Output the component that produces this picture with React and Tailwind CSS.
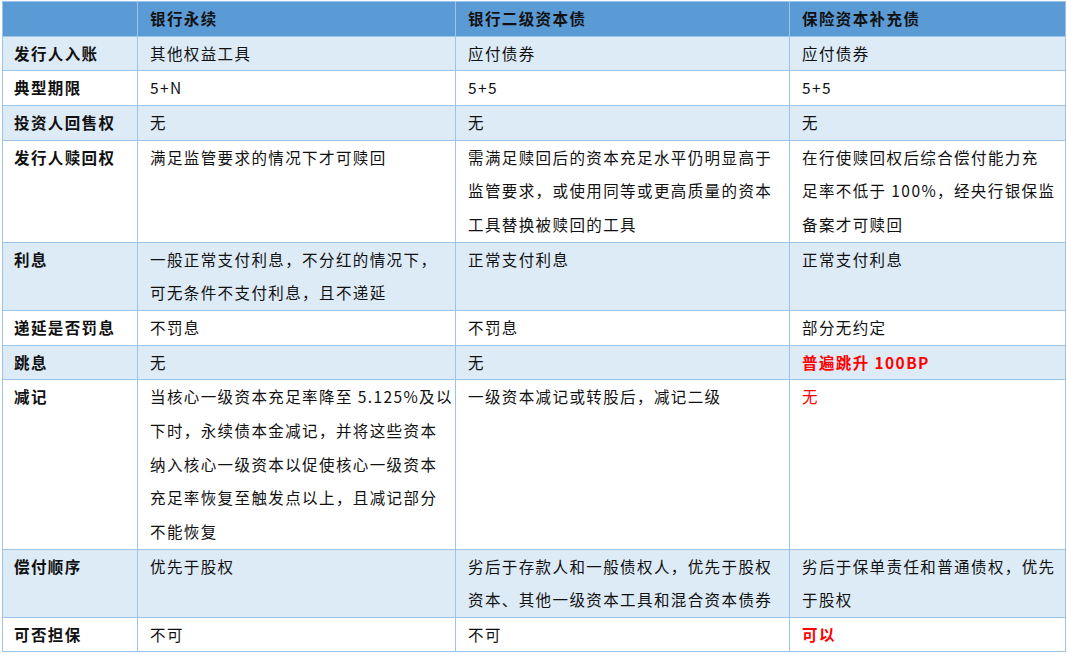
import React from "react";

const rows = [
  { h: "发行人入账", c: [["其他权益工具"], ["应付债券"], ["应付债券"]] },
  { h: "典型期限", c: [["5+N"], ["5+5"], ["5+5"]] },
  { h: "投资人回售权", c: [["无"], ["无"], ["无"]] },
  {
    h: "发行人赎回权",
    c: [
      ["满足监管要求的情况下才可赎回"],
      ["需满足赎回后的资本充足水平仍明显高于", "监管要求，或使用同等或更高质量的资本", "工具替换被赎回的工具"],
      ["在行使赎回权后综合偿付能力充", "足率不低于 100%，经央行银保监", "备案才可赎回"],
    ],
  },
  {
    h: "利息",
    c: [["一般正常支付利息，不分红的情况下，", "可无条件不支付利息，且不递延"], ["正常支付利息"], ["正常支付利息"]],
  },
  { h: "递延是否罚息", c: [["不罚息"], ["不罚息"], ["部分无约定"]] },
  { h: "跳息", c: [["无"], ["无"], ["普遍跳升 100BP"]], red: "bold" },
  {
    h: "减记",
    c: [
      ["当核心一级资本充足率降至 5.125%及以", "下时，永续债本金减记，并将这些资本", "纳入核心一级资本以促使核心一级资本", "充足率恢复至触发点以上，且减记部分", "不能恢复"],
      ["一级资本减记或转股后，减记二级"],
      ["无"],
    ],
    red: "normal",
  },
  {
    h: "偿付顺序",
    c: [["优先于股权"], ["劣后于存款人和一般债权人，优先于股权", "资本、其他一级资本工具和混合资本债券"], ["劣后于保单责任和普通债权，优先", "于股权"]],
  },
  { h: "可否担保", c: [["不可"], ["不可"], ["可以"]], red: "bold" },
];

export default function App() {
  return (
    <div
      className="w-[1067px] h-[656px] bg-white pl-[2px] pt-[1px] text-[#111]"
      style={{ fontFamily: '"Noto Sans CJK SC", "Noto Sans", sans-serif' }}
    >
      <table className="table-fixed w-[1063px] border-collapse text-[15.5px] leading-[33.65px] tracking-[1.4px]">
        <colgroup>
          <col className="w-[135px]" />
          <col className="w-[318px]" />
          <col className="w-[334px]" />
          <col className="w-[276px]" />
        </colgroup>
        <thead>
          <tr className="bg-[#5b9bd5]">
            <th className="border border-[#9dc3e6] px-3 text-left font-bold"></th>
            <th className="border border-[#9dc3e6] px-3 text-left font-bold">银行永续</th>
            <th className="border border-[#9dc3e6] px-3 text-left font-bold">银行二级资本债</th>
            <th className="border border-[#9dc3e6] px-3 text-left font-bold">保险资本补充债</th>
          </tr>
        </thead>
        <tbody>
          {rows.map((r, i) => (
            <tr key={i} className={i % 2 === 0 ? "bg-[#ddebf7]" : "bg-white"}>
              <td className="border border-[#9dc3e6] pl-[11px] pr-0 align-top font-bold whitespace-nowrap overflow-visible">{r.h}</td>
              {r.c.map((lines, j) => {
                const isRed = r.red && j === 2;
                const cls = isRed
                  ? r.red === "bold"
                    ? "text-[#ff0000] font-bold"
                    : "text-[#ff0000]"
                  : "";
                return (
                  <td key={j} className={`border border-[#9dc3e6] pl-3 pr-0 align-top whitespace-nowrap overflow-visible ${cls}`}>
                    {lines.map((l, k) => (
                      <div key={k}>{l}</div>
                    ))}
                  </td>
                );
              })}
            </tr>
          ))}
        </tbody>
      </table>
    </div>
  );
}
